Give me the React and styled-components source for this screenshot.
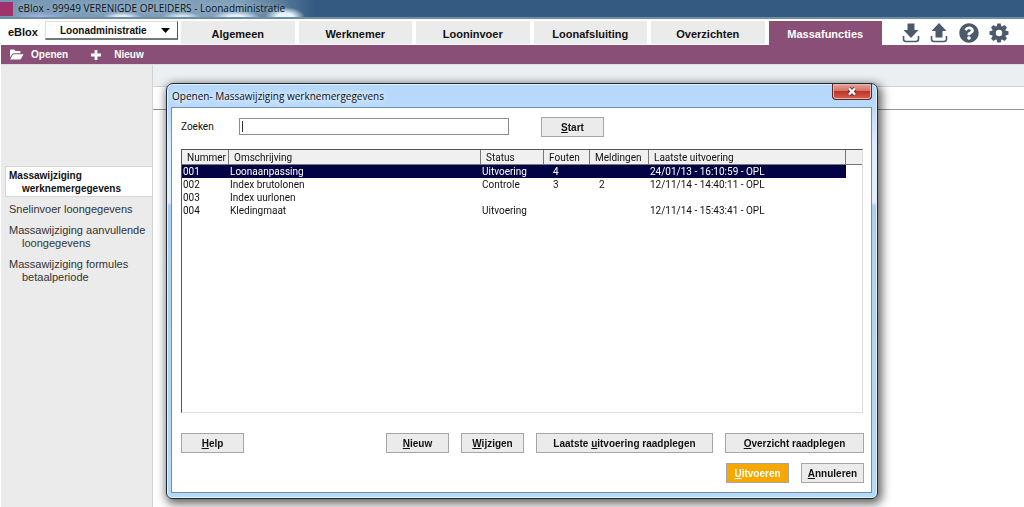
import React from "react";
import styled, { createGlobalStyle, css } from "styled-components";

const GlobalStyle = createGlobalStyle`
  * { box-sizing: border-box; }
  body {
    margin: 0;
    background: #fff;
    color: #111;
    font: 11px/13px "Liberation Sans", Arial, sans-serif;
  }
  button, input, select { font: inherit; color: inherit; margin: 0; }
`;

const captionFont = `"Open Sans", "Noto Sans", sans-serif`;
const listFont = `Roboto, "Liberation Sans", sans-serif`;

const Page = styled.div`
  position: relative;
  display: flex;
  flex-direction: column;
  min-height: 100vh;
`;

const TitleBar = styled.div`
  display: flex;
  align-items: center;
  gap: 5px;
  height: 19px;
  border-bottom: 2px solid #6f8ea6;
  background:
    radial-gradient(ellipse 20px 10px at 285px 100%, #e6f6fb 40%, transparent),
    radial-gradient(ellipse 24px 6px at 236px 100%, #eaf2ff 30%, transparent),
    radial-gradient(ellipse 20px 5px at 182px 100%, #d5e2ee 30%, transparent),
    radial-gradient(ellipse 20px 5px at 122px 100%, #e6ecf8 30%, transparent),
    radial-gradient(ellipse 30px 5px at 40px 100%, #a9b4e8, transparent),
    linear-gradient(90deg, #7698b4 0, #80a0b9 240px, #335a80 315px);
  font-family: ${captionFont};
  font-size: 10px;
  color: #0c1420;
  text-shadow: 0 0 6px rgba(225, 238, 248, 0.7);
  white-space: nowrap;
`;

const AppMark = styled.span`
  width: 13px;
  height: 14px;
  background: #a0336a;
`;

const Header = styled.header`
  display: flex;
  align-items: flex-end;
  height: 26px;
  padding-left: 8px;
  background: #fff;
`;

const Brand = styled.strong`
  width: 37px;
  align-self: center;
`;

const SelectWrap = styled.label`
  display: flex;
  align-items: center;
  width: 133px;
  height: 19px;
  align-self: flex-start;
  margin: 2px 3px 0 0;
  border: 1px solid #ddd;
  border-right-color: #555;
  border-bottom: 2px solid #777;
`;

const ModuleSelect = styled.select`
  appearance: none;
  flex: 1;
  width: 100%;
  height: 100%;
  padding: 0 0 0 14px;
  border: 0;
  background: transparent;
  font-size: 10px;
  font-weight: bold;
`;

const Caret = styled.svg`
  width: 9px;
  height: 5px;
  margin-right: 7px;
  pointer-events: none;
`;

const Tabs = styled.nav`
  display: grid;
  grid-template-columns: repeat(6, 1fr);
  gap: 4px;
  flex: 1;
`;

const Tab = styled.a`
  display: flex;
  align-items: center;
  justify-content: center;
  height: 24px;
  padding-top: 4px;
  border-bottom: 1px solid ${(p) => (p.$active ? "#8a4f76" : "#fff")};
  background: ${(p) => (p.$active ? "#8a4f76" : "#ebebeb")};
  color: ${(p) => (p.$active ? "#fff" : "#111")};
  font-weight: bold;
  text-decoration: none;
`;

const HeaderIcons = styled.div`
  display: flex;
  justify-content: space-between;
  align-items: center;
  width: 107px;
  margin: 0 15px 2px 20px;
`;

const IconButton = styled.button`
  display: flex;
  padding: 0;
  border: 0;
  background: none;
  color: #4b596b;
`;

const Toolbar = styled.div`
  display: flex;
  align-items: center;
  gap: 23px;
  height: 19px;
  margin-left: 1px;
  padding-left: 8px;
  background: #8a4f76;
`;

const ToolButton = styled.button`
  display: flex;
  align-items: center;
  gap: ${(p) => p.$gap}px;
  padding: 0;
  border: 0;
  background: none;
  color: #fff;
  font-size: 10px;
  font-weight: bold;
`;

const Body = styled.div`
  display: flex;
  flex: 1;
  margin-left: 1px;
  border-top: 1px solid #ddd;
`;

const Sidebar = styled.nav`
  display: flex;
  flex-direction: column;
  gap: 8px;
  width: 151px;
  padding: 101px 0 0 4px;
  background: #ebebeb;
`;

const SideLink = styled.a`
  padding: 0 0 0 17px;
  text-indent: -13px;
  color: #333;
  text-decoration: none;
  ${(p) =>
    p.$active &&
    css`
      padding: 2px 0 1px 16px;
      margin-bottom: -2px;
      border: 1px solid #d6d6d6;
      border-right: 0;
      background: #fff;
      color: #111;
      font-size: 10px;
      font-weight: bold;
    `}
`;

const SecondLine = styled.span`
  display: block;
  text-indent: 0;
`;

const Main = styled.main`
  flex: 1;
  border-left: 1px solid #d2d2d2;
`;

const InfoStrip = styled.div`
  height: 22px;
  background: #eaeff2;
  border-bottom: 1px solid #cfd3d6;
`;

const BlankStrip = styled.div`
  height: 23px;
  border-bottom: 1px solid #8f9296;
`;

const Dialog = styled.section`
  position: absolute;
  top: 83px;
  left: 166px;
  right: 146px;
  padding: 0 5px 5px 4px;
  border: 1px solid #1d2733;
  border-radius: 7px 7px 6px 6px;
  background: linear-gradient(180deg, #b4d8fb 0, #b8dafc 24px, #dcebfb 60px, #e2eefb 118px, #a9d1ef 122px, #b6d9f6 100%);
  box-shadow: inset 0 0 0 1px #e4f2fd, 2px 3px 10px 2px rgba(0, 0, 0, 0.6);
`;

const DialogHead = styled.div`
  display: flex;
  align-items: flex-start;
  justify-content: space-between;
  height: 23px;
  font-family: ${captionFont};
`;

const DialogTitle = styled.h1`
  margin: 0;
  padding: 0 8px 0 1px;
  font-size: 10px;
  line-height: 24px;
  font-weight: normal;
  text-shadow: 0 0 6px #fff, 0 0 8px #fff;
  white-space: nowrap;
`;

const CloseButton = styled.button`
  display: flex;
  align-items: center;
  justify-content: center;
  width: 40px;
  height: 16px;
  padding: 0;
  border: 1px solid #5e2430;
  border-top: 0;
  border-radius: 0 0 4px 4px;
  background: linear-gradient(180deg, #e3a69b 0, #d47466 45%, #bd3524 50%, #d4614a 100%);
  box-shadow: inset 0 0 0 1px #e9b5aa;
`;

const DialogBody = styled.div`
  padding: 9px 7px 9px 9px;
  border: 1px solid #6f8fb0;
  background: #fff;
`;

const SearchRow = styled.form`
  display: flex;
  align-items: flex-start;
`;

const SearchLabel = styled.label`
  width: 58px;
  font-family: ${listFont};
  font-size: 10px;
  line-height: 20px;
`;

const SearchInput = styled.input`
  width: 270px;
  height: 17px;
  margin: 1px 32px 0 0;
  padding: 0 2px;
  border: 1px solid #8c8c8c;
  outline: 0;
  background: linear-gradient(#333, #333) 2px 2px / 1px 11px no-repeat #fff;
  caret-color: transparent;
`;

const ListBox = styled.div`
  height: 264px;
  margin: 12px 1px 20px 0;
  border: 1px solid #ddd;
  border-left-color: #555;
  border-top-color: #555;
  font-family: ${listFont};
  font-size: 10px;
`;

const Table = styled.table`
  width: 100%;
  table-layout: fixed;
  border-collapse: separate;
  border-spacing: 0;
`;

const Col = styled.col`
  width: ${(p) => (p.$w ? `${p.$w}px` : "auto")};
`;

const Th = styled.th`
  height: 15px;
  padding: 2px 0 0 5px;
  border-right: 1px solid #777;
  border-bottom: 1px solid #777;
  background: #f0f0f0;
  font-weight: normal;
  line-height: 12px;
  text-align: left;
  &:last-child { border-right: 0; }
`;

const Td = styled.td`
  height: 13px;
  padding: 0 0 0 ${(p) => p.$pad || 1}px;
  line-height: 13px;
  white-space: nowrap;
`;

const Row = styled.tr`
  ${(p) =>
    p.$selected &&
    css`
      color: #fff;
      ${Td}:not(:last-child) { background: #020244; }
    `}
`;

const Actions = styled.div`
  display: flex;
  justify-content: flex-end;
  gap: 12px;
  margin-bottom: 10px;
  &:last-child { margin-bottom: 0; }
`;

const Button = styled.button`
  width: ${(p) => p.$w || 63}px;
  height: 20px;
  padding: 0;
  border: 1px solid #a6a6a6;
  background: ${(p) => (p.$primary ? "#f6a800" : "#ebebeb")};
  color: ${(p) => (p.$primary ? "#fff" : "#111")};
  font-size: 10px;
  font-weight: bold;
  white-space: nowrap;
  margin-right: ${(p) => (p.$start ? "auto" : "0")};
`;

const TransferIcon = ({ up }) => (
  <svg width="18" height="20" viewBox="0 0 18 20" fill="currentColor" aria-hidden="true">
    <path d={up ? "M9 0 L16.500 8 H12.500 V14.500 H5.500 V8 H1.500 Z" : "M5.500 0.500 H12.500 V7 H16.500 L9 15 L1.500 7 H5.500 Z"} />
    <path
      d="M1.500 13 V16 Q1.500 18.500 4 18.500 H14 Q16.500 18.500 16.500 16 V13"
      fill="none"
      stroke="currentColor"
      strokeWidth="1.600"
    />
  </svg>
);

const HelpIcon = () => (
  <svg width="20" height="20" viewBox="0 0 512 512" fill="currentColor" aria-hidden="true">
    <path d="M504 256c0 137-111 248-248 248S8 393 8 256 119 8 256 8s248 111 248 248zM262.700 90c-54.500 0-89.200 23-116.500 63.800-3.500 5.300-2.400 12.400 2.700 16.300l34.700 26.300c5.200 3.900 12.600 3 16.700-2.100 17.900-22.700 30.100-35.800 57.300-35.800 20.400 0 45.700 13.100 45.700 33 0 15-12.400 22.700-32.500 34C247.100 238.500 216 254.900 216 296v4c0 6.600 5.400 12 12 12h56c6.600 0 12-5.400 12-12v-1.300c0-28.500 83.200-29.600 83.200-106.700 0-58-60.200-102-116.500-102zM256 338c-25.400 0-46 20.600-46 46s20.600 46 46 46 46-20.600 46-46-20.600-46-46-46z" />
  </svg>
);

const GearIcon = () => (
  <svg width="20" height="20" viewBox="0 0 20 20" fill="currentColor" aria-hidden="true">
    {[0, 45, 90, 135].map((angle) => (
      <path key={angle} d="M8.300 0.500 H11.700 L12.500 4 V16 L11.700 19.500 H8.300 L7.500 16 V4 Z" transform={`rotate(${angle} 10 10)`} />
    ))}
    <circle cx="10" cy="10" r="7" />
    <circle cx="10" cy="10" r="3.200" fill="#fff" />
  </svg>
);

const FolderIcon = () => (
  <svg width="15" height="12" viewBox="0 0 15 12" fill="#fff" aria-hidden="true">
    <path d="M1 8.500 V1.500 Q1 .5 2 .5 H5 L6.500 2 H10.500 Q11.500 2 11.500 3 V4.200 H4.800 Q3.800 4.200 3.200 5 Z" />
    <path d="M4.800 5.200 H14.600 L12 9.700 Q11.500 10.500 10.500 10.500 H1.200 L3.700 6 Q4.200 5.200 4.800 5.200 Z" />
  </svg>
);

const PlusIcon = () => (
  <svg width="10" height="10" viewBox="0 0 10 10" fill="#fff" aria-hidden="true">
    <path d="M3.600 0 H6.400 V3.600 H10 V6.400 H6.400 V10 H3.600 V6.400 H0 V3.600 H3.600 Z" />
  </svg>
);

const CloseIcon = () => (
  <svg width="10" height="9" viewBox="0 0 10 9" aria-hidden="true">
    <path d="M2 1.500 L8 7.500 M8 1.500 L2 7.500" stroke="#54323a" strokeWidth="4" />
    <path d="M2 1.500 L8 7.500 M8 1.500 L2 7.500" stroke="#fff" strokeWidth="2.400" />
  </svg>
);

const tabs = ["Algemeen", "Werknemer", "Looninvoer", "Loonafsluiting", "Overzichten", "Massafuncties"];

const sideItems = [
  ["Massawijziging", "werknemergegevens"],
  ["Snelinvoer loongegevens"],
  ["Massawijziging aanvullende", "loongegevens"],
  ["Massawijziging formules", "betaalperiode"],
];

const columns = [
  { title: "Nummer", width: 47 },
  { title: "Omschrijving" },
  { title: "Status", width: 63 },
  { title: "Fouten", width: 46, pad: 9 },
  { title: "Meldingen", width: 59, pad: 9 },
  { title: "Laatste uitvoering", width: 197 },
  { title: "", width: 16 },
];

const rows = [
  ["001", "Loonaanpassing", "Uitvoering", "4", "", "24/01/13 - 16:10:59 - OPL", ""],
  ["002", "Index brutolonen", "Controle", "3", "2", "12/11/14 - 14:40:11 - OPL", ""],
  ["003", "Index uurlonen", "", "", "", "", ""],
  ["004", "Kledingmaat", "Uitvoering", "", "", "12/11/14 - 15:43:41 - OPL", ""],
];

export default function App() {
  return (
    <Page>
      <GlobalStyle />
      <TitleBar>
        <AppMark />
        <span>eBlox - 99949 VERENIGDE OPLEIDERS - Loonadministratie</span>
      </TitleBar>
      <Header>
        <Brand>eBlox</Brand>
        <SelectWrap>
          <ModuleSelect aria-label="Module" defaultValue="Loonadministratie">
            <option>Loonadministratie</option>
          </ModuleSelect>
          <Caret viewBox="0 0 9 5" aria-hidden="true">
            <path d="M0 0 H9 L4.500 5 Z" />
          </Caret>
        </SelectWrap>
        <Tabs>
          {tabs.map((name) => (
            <Tab key={name} href="#" $active={name === "Massafuncties"}>
              {name}
            </Tab>
          ))}
        </Tabs>
        <HeaderIcons>
          <IconButton aria-label="Downloaden"><TransferIcon /></IconButton>
          <IconButton aria-label="Uploaden"><TransferIcon up /></IconButton>
          <IconButton aria-label="Hulp"><HelpIcon /></IconButton>
          <IconButton aria-label="Instellingen"><GearIcon /></IconButton>
        </HeaderIcons>
      </Header>
      <Toolbar>
        <ToolButton $gap={7}><FolderIcon />Openen</ToolButton>
        <ToolButton $gap={13}><PlusIcon />Nieuw</ToolButton>
      </Toolbar>
      <Body>
        <Sidebar>
          {sideItems.map(([first, second], i) => (
            <SideLink key={first + i} href="#" $active={i === 0}>
              {first}
              {second && <SecondLine>{second}</SecondLine>}
            </SideLink>
          ))}
        </Sidebar>
        <Main>
          <InfoStrip />
          <BlankStrip />
        </Main>
      </Body>
      <Dialog role="dialog" aria-labelledby="dialog-title">
        <DialogHead>
          <DialogTitle id="dialog-title">Openen- Massawijziging werknemergegevens</DialogTitle>
          <CloseButton aria-label="Sluiten"><CloseIcon /></CloseButton>
        </DialogHead>
        <DialogBody>
          <SearchRow onSubmit={(e) => e.preventDefault()}>
            <SearchLabel htmlFor="search">Zoeken</SearchLabel>
            <SearchInput id="search" type="text" autoFocus />
            <Button type="submit"><u>S</u>tart</Button>
          </SearchRow>
          <ListBox>
            <Table>
              <colgroup>
                {columns.map((c, i) => <Col key={i} $w={c.width} />)}
              </colgroup>
              <thead>
                <tr>{columns.map((c, i) => <Th key={i} scope="col">{c.title}</Th>)}</tr>
              </thead>
              <tbody>
                {rows.map((row, r) => (
                  <Row key={row[0]} $selected={r === 0}>
                    {row.map((cell, i) => <Td key={i} $pad={columns[i].pad}>{cell}</Td>)}
                  </Row>
                ))}
              </tbody>
            </Table>
          </ListBox>
          <Actions>
            <Button $start><u>H</u>elp</Button>
            <Button><u>N</u>ieuw</Button>
            <Button><u>W</u>ijzigen</Button>
            <Button $w={177}>Laatste <u>u</u>itvoering raadplegen</Button>
            <Button $w={139}><u>O</u>verzicht raadplegen</Button>
          </Actions>
          <Actions>
            <Button $primary><u>U</u>itvoeren</Button>
            <Button><u>A</u>nnuleren</Button>
          </Actions>
        </DialogBody>
      </Dialog>
    </Page>
  );
}
